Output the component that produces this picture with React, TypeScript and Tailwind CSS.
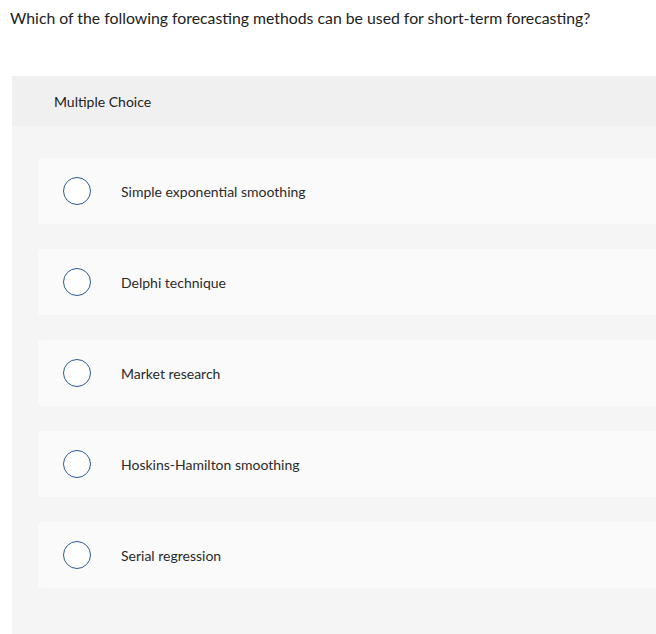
import React from "react";

const options = [
  "Simple exponential smoothing",
  "Delphi technique",
  "Market research",
  "Hoskins-Hamilton smoothing",
  "Serial regression",
];

export default function App() {
  return (
    <div
      className="bg-white w-[656px] h-[634px] overflow-hidden text-[#333333]"
      style={{ fontFamily: "Lato, 'Noto Sans', sans-serif" }}
    >
      <div className="pl-[10px] pt-[8px] h-[76px] text-[15.8px] leading-[20px] text-[#222222]">
        Which of the following forecasting methods can be used for short-term forecasting?
      </div>
      <div className="ml-[12px]">
        <div className="h-[50px] bg-[#f0f0f0] pl-[42px] flex items-center text-[14px] text-[#222222]">
          Multiple Choice
        </div>
        <div className="bg-[#f5f5f5] pt-[32px] pb-[46px] pl-[26px] flex flex-col gap-[25px]">
          {options.map((o) => (
            <div
              key={o}
              className="h-[66px] bg-[#fafafa] rounded-l-[3px] flex items-center pl-[25px]"
            >
              <div className="w-[28px] h-[28px] rounded-full border-[1.5px] border-[#2c5a93] bg-white shrink-0" />
              <div className="ml-[30px] text-[14px] text-[#2a2a2a]">{o}</div>
            </div>
          ))}
        </div>
      </div>
    </div>
  );
}
